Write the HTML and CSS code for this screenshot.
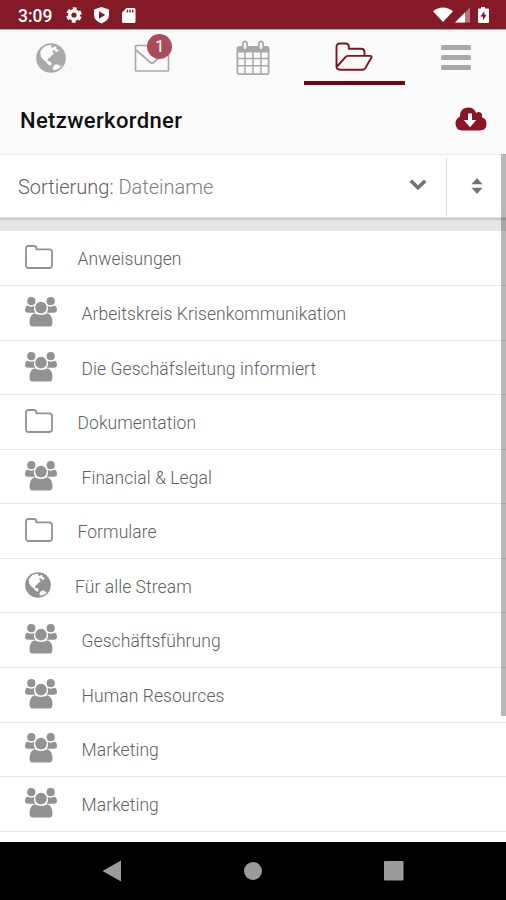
FILE: index.html
```
<!DOCTYPE html>
<html lang="de">
<head>
<meta charset="utf-8">
<title>Netzwerkordner</title>
<link rel="stylesheet" href="styles.css">
</head>
<body>
<svg class="defs" width="0" height="0" aria-hidden="true">
  <symbol id="globe" viewBox="0 0 30 30">
    <circle cx="15" cy="15" r="14.8" fill="currentColor"/>
    <path fill="#fcfcfc" d="M5.200 7 8.500 3.500 13 1.900l3 .3-1.300 1.900 2.800.6.800-1.600 2.200 1-.3 1.700 2.800 1.500-1.600 1.700-2-.3-.7-1.600-2.100.7.200 2 1.600.5-2.600 2-1.700 2.200-2.200 1.300-.4 2.300 2.800.5 1.400 2-.9 2.200-2.700-1.200-2.400-3-2.800-2.200-2.100-3.200-.5-4z"/>
    <path fill="#fcfcfc" d="m17.800 22.800 1.900-1.500 2.500.4 1.500 1.300 1.700-.4-1.500 2.300-3.200 1.900-3.300.4-.8-2.200z"/>
  </symbol>
  <symbol id="folder" viewBox="0 0 28 24">
    <path fill="none" stroke="currentColor" stroke-width="1.800" stroke-linejoin="round" d="M1 3.700Q1 1 3.700 1h5.100q2.600 0 2.600 2.500v.9h12.900q2.700 0 2.700 2.700v13.100q0 2.800-2.700 2.800H3.700Q1 23 1 20.200z"/>
  </symbol>
  <symbol id="group" viewBox="0 0 32 30">
    <g fill="currentColor">
      <circle cx="6.300" cy="4.200" r="4.100"/><circle cx="25.700" cy="4.200" r="4.100"/>
      <path d="M2 8.600q4 2 7.400.2-1.200 4 1 7H3.300Q0 15.800 0 13q0-3 2-4.400zM30 8.600q-4 2-7.400.2 1.200 4-1 7h7.100q3.300 0 3.300-2.800 0-3-2-4.400z"/>
      <circle cx="16" cy="10.600" r="5.800"/>
      <path d="M9.500 16.200q6.500 3.600 13 0 5 1.800 5 9.200 0 4.200-4 4.200h-15q-4 0-4-4.200 0-7.400 5-9.200z"/>
    </g>
  </symbol>
</svg>
<header class="status">
  <span class="clock">3:09</span>
  <svg class="left-icons" width="72" height="18" viewBox="0 0 72 18" fill="#fff">
    <circle cx="8" cy="9" r="4.300" fill="none" stroke="#fff" stroke-width="3.400"/>
    <circle cx="8" cy="9" r="6.500" fill="none" stroke="#fff" stroke-width="2.600" stroke-dasharray="3.800 3.007" stroke-dashoffset="-1.500"/>
    <path fill-rule="evenodd" d="M35.500 1 43 3.500V9q0 5.500-7.500 8.500Q28 14.500 28 9V3.500zM33 5.300v7.400L39.300 9z"/>
    <path fill-rule="evenodd" d="M60.500 2H68q1.500 0 1.500 1.500v12Q69.500 17 68 17H57.500Q56 17 56 15.500V6.500zM60.800 3.800v2.600h1.400V3.800zm2.600 0v2.600h1.400V3.800zm2.600 0v2.600h1.400V3.800z"/>
  </svg>
  <svg class="right-icons" width="60" height="18" viewBox="0 0 60 18" fill="#fff">
    <path d="M0 5.200Q10-2.300 20 5.200L10 16z"/>
    <path opacity=".4" d="M22 16.500 37 1.500v15z"/><path d="M22 16.500 32 6.500v10z"/>
    <path fill-rule="evenodd" d="M48 1h4v1.600h3q1 0 1 1V16q0 1-1 1H46q-1 0-1-1V3.600q0-1 1-1h2zM51.400 5l-4 5.500h2.500V14.500l3.700-5.700h-2.200z"/>
  </svg>
</header>
<nav class="tabs">
  <a class="tab"><svg width="30" height="30"><use href="#globe"/></svg></a>
  <a class="tab mail">
    <svg width="36" height="30" viewBox="0 0 36 30" fill="none" stroke="#a9a9a9" stroke-width="1.700"><rect x="1.500" y="2.500" width="33" height="25.500" rx="1"/><path d="m2 7 14.500 12.500q1.500 1.300 3 0L34 7"/></svg>
    <span class="badge">1</span>
  </a>
  <a class="tab"><svg width="34" height="36" viewBox="0 0 34 36"><path fill="#a9a9a9" fill-rule="evenodd" d="M3 6h3V4q0-3.500 3-3.500T12 4v2h10V4q0-3.500 3-3.500T28 4v2h3q2.500 0 2.500 2.500v24Q33.500 35 31 35H3Q.5 35 .5 32.500v-24Q.5 6 3 6zM2.300 12.500v5.300h5.900v-5.300zm7.400 0v5.300h6.500v-5.300zm8 0v5.300h6.500v-5.300zm8 0v5.300h6v-5.300zM2.300 19.300v5.700h5.900v-5.700zm7.400 0v5.700h6.500v-5.700zm8 0v5.700h6.500v-5.700zm8 0v5.700h6v-5.700zM2.300 26.500v6.700h5.900v-6.700zm7.400 0v6.700h6.500v-6.700zm8 0v6.700h6.500v-6.700zm8 0v6.700h6v-6.700z"/><path stroke="#fafafa" stroke-width="2.600" stroke-linecap="round" d="M9 3.800v4M25 3.800v4"/></svg></a>
  <a class="tab active"><svg width="38" height="30" viewBox="0 0 38 30" fill="none" stroke="#7f1522" stroke-width="1.900" stroke-linejoin="round"><path d="M1.500 25V5q0-3.500 3.500-3.500h5.500q3.300 0 3.300 3v2.300h12q3.700 0 3.700 3.500v3.600M1.600 25q.2 2.700 3.400 2.700h22.500q1.700 0 2.700-1.500l6-10.100q1.100-2.200-1.200-2.200H13q-1.700 0-2.800 1.500z"/></svg></a>
  <a class="tab menu"><svg width="30" height="26" viewBox="0 0 30 26" fill="#a9a9a9"><rect y="0" width="30" height="5" rx="1.500"/><rect y="10" width="30" height="5" rx="1.500"/><rect y="20" width="30" height="5" rx="1.500"/></svg></a>
</nav>
<div class="title">
  <h1>Netzwerkordner</h1>
  <svg width="32" height="24" viewBox="0 0 32 24"><path fill="#8b1426" d="M7.500 23.500Q.5 23.200.5 16.500q0-4.600 4.300-6.700Q4.800 1 13 .5q6 0 8.200 5.400 2.700-2 5 .2 1.500 1.500.7 4.100 4.600 1.300 4.600 6.600 0 6.400-6.600 6.700z"/><path fill="#fff" d="M13 6.500h4V13h4.300L15 20.300 8.700 13H13z"/></svg>
</div>
<div class="sort">
  <div class="field"><span>Sortierung: <em>Dateiname</em></span>
    <svg width="18" height="12" viewBox="0 0 18 12"><path d="m1.800 1.800 7.200 7 7.200-7" fill="none" stroke="#747474" stroke-width="3.600"/></svg>
  </div>
  <div class="order"><svg width="12" height="16" viewBox="0 0 12 16" fill="#747474"><path d="m6 0 5.500 6.300H.5zM6 16l5.500-6.300H.5z"/></svg></div>
</div>
<main class="list">
  <div class="row folder"><svg><use href="#folder"/></svg><span>Anweisungen</span></div>
  <div class="row group"><svg><use href="#group"/></svg><span>Arbeitskreis Krisenkommunikation</span></div>
  <div class="row group"><svg><use href="#group"/></svg><span>Die Geschäfsleitung informiert</span></div>
  <div class="row folder"><svg><use href="#folder"/></svg><span>Dokumentation</span></div>
  <div class="row group"><svg><use href="#group"/></svg><span>Financial &amp; Legal</span></div>
  <div class="row folder"><svg><use href="#folder"/></svg><span>Formulare</span></div>
  <div class="row globe"><svg><use href="#globe"/></svg><span>Für alle Stream</span></div>
  <div class="row group"><svg><use href="#group"/></svg><span>Geschäftsführung</span></div>
  <div class="row group"><svg><use href="#group"/></svg><span>Human Resources</span></div>
  <div class="row group"><svg><use href="#group"/></svg><span>Marketing</span></div>
  <div class="row group"><svg><use href="#group"/></svg><span>Marketing</span></div>
</main>
<footer class="navbar">
  <svg width="20" height="22" viewBox="0 0 20 22"><path fill="#9b9b9b" d="M.5 11 19 .5v21z"/></svg>
  <svg width="18" height="18" viewBox="0 0 18 18"><circle cx="9" cy="9" r="9" fill="#9b9b9b"/></svg>
  <svg width="20" height="20" viewBox="0 0 20 20"><rect width="19.500" height="19.500" rx="1" fill="#9b9b9b"/></svg>
</footer>
<div class="scrollbar"></div>
</body>
</html>
```
FILE: styles.css
```
* { box-sizing: border-box; }
body {
  position: relative;
  display: flex;
  flex-direction: column;
  width: 506px;
  height: 900px;
  margin: 0;
  overflow: hidden;
  background: #fff;
  font-family: Roboto, sans-serif;
}
svg { display: block; flex: none; }
.defs { position: absolute; }
.status {
  display: flex;
  align-items: center;
  height: 30px;
  padding: 1px 13px 0 18px;
  background: #851a27;
  border-bottom: 1px solid #c9979d;
  color: #fff;
}
.clock { width: 48px; padding-top: 1px; font-size: 17.5px; font-weight: 500; }
.right-icons { margin-left: auto; }
.tabs { display: grid; grid-template-columns: repeat(5, 1fr); height: 56px; background: #fafafa; }
.tab {
  display: flex;
  align-items: center;
  justify-content: center;
  height: 55px;
  border-bottom: 4px solid transparent;
  padding-top: 5px;
  color: #a9a9a9;
}
.active { border-color: #730611; padding-top: 3px; }
.menu { padding-left: 2px; }
.mail { position: relative; padding-left: 1px; }
.badge {
  position: absolute;
  left: 46px;
  top: 4px;
  width: 25px;
  height: 25px;
  border-radius: 50%;
  background: #a84d59;
  color: #fff;
  font-size: 17px;
  line-height: 25px;
  text-align: center;
}
.title {
  display: flex;
  align-items: center;
  justify-content: space-between;
  height: 69px;
  padding: 0 19px 0 20px;
  background: #fafafa;
  border-bottom: 1px solid #ebebeb;
}
.title h1 { margin: 0; font-size: 22px; font-weight: 500; letter-spacing: .35px; color: #111; }
.title svg { margin-bottom: 2px; }
.sort {
  display: flex;
  height: 76px;
  padding-bottom: 11px;
  background: linear-gradient(#fff 62px, #c9c7c7 63px, #c9c7c7 64px, #e8e5e5 66px);
}
.field {
  display: flex;
  align-items: center;
  justify-content: space-between;
  width: 446px;
  padding: 0 19px 2px 18px;
  color: #606060;
  font-size: 20px;
  font-weight: 300;
}
.field em { color: #808080; font-style: normal; }
.field svg { margin-bottom: 4px; }
.order {
  display: flex;
  align-items: center;
  width: 60px;
  height: 57px;
  margin-top: 3px;
  padding: 0 0 2px 24px;
  border-left: 1px solid #d6d9da;
}
.list { flex: 1; background: #fff; }
.row {
  display: flex;
  align-items: center;
  height: 54.55px;
  padding: 1px 0 0 25px;
  border-bottom: 1px solid #e6e6e6;
  color: #606060;
  font-size: 17.5px;
  font-weight: 300;
  letter-spacing: .07px;
}
.row:first-child { height: 55.2px; }
.row svg { color: #929292; margin-bottom: 3px; }
.row span { padding-top: 1px; }
.folder svg { width: 28px; height: 24px; margin-right: 24.5px; }
.group svg { width: 32px; height: 30px; margin-right: 24.5px; }
.globe svg { width: 26px; height: 26px; margin-right: 24px; }
.navbar {
  display: flex;
  align-items: center;
  justify-content: space-between;
  height: 58px;
  padding: 0 102px;
  background: #000;
}
.scrollbar {
  position: absolute;
  right: 0;
  top: 154px;
  width: 5px;
  height: 562px;
  background: rgba(0, 0, 0, .28);
}
```
